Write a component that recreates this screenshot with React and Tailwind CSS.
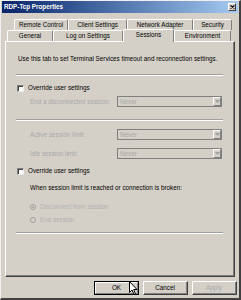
import React from 'react';

const backTabs = [
  ['Remote Control', 'w-[54px]'],
  ['Client Settings', 'w-[59px]'],
  ['Network Adapter', 'w-[66px]'],
  ['Security', 'w-[39px]'],
];

const frontTabs = [
  ['General', 'w-[46px]', false],
  ['Log on Settings', 'w-[70px]', false],
  ['Sessions', 'w-[51px]', true],
  ['Environment', 'w-[57px]', false],
];

const Separator = ({ className = '' }) => (
  <div className={`ml-[10px] mr-[11px] border-t border-t-[#a0a0a0] border-b border-b-white ${className}`} />
);

const Checkbox = () => (
  <div className="w-[7px] h-[7px] bg-white border border-t-[#808080] border-l-[#808080] border-r-[#e8e8e8] border-b-[#e8e8e8] shadow-[inset_1px_1px_0_#404040]" />
);

const Dropdown = () => (
  <div className="ml-auto mr-[12px] w-[105px] h-[11px] flex items-stretch border border-[#808080] bg-[#d4d0c8]">
    <span className="flex-1 pl-[2px] text-[#a8a8a8] leading-[9px]">Never</span>
    <div className="w-[8px] border border-t-white border-l-white border-r-[#808080] border-b-[#808080] flex items-center justify-center">
      <svg width="5" height="3" viewBox="0 0 5 3"><path d="M0 0h5L2.5 3z" fill="#a0a0a0" /></svg>
    </div>
  </div>
);

const Radio = ({ checked }) => (
  <div className="w-[6px] h-[6px] rounded-full border border-[#a0a0a0] bg-[#d4d0c8] flex items-center justify-center">
    {checked && <div className="w-[2px] h-[2px] rounded-full bg-[#a0a0a0]" />}
  </div>
);

const Button = ({ children, isDefault, disabled }) => (
  <div
    className={`w-[45px] h-[14px] flex items-center justify-center border ${
      isDefault ? 'border-black' : 'border-t-white border-l-white border-r-[#404040] border-b-[#404040]'
    } bg-[#d4d0c8]`}
  >
    <div
      className={`w-full h-full flex items-center justify-center ${
        isDefault ? 'border border-t-white border-l-white border-r-[#808080] border-b-[#808080]' : 'border-r border-b border-r-[#808080] border-b-[#808080]'
      } ${disabled ? 'text-[#a8a8a8]' : 'text-black'}`}
    >
      {children}
    </div>
  </div>
);

export default function App() {
  return (
    <div
      className="relative w-[241px] h-[300px] bg-[#d4d0c8] flex flex-col border-l border-t border-l-[#f0f0f0] border-t-[#f0f0f0] border-r-2 border-b-2 border-r-[#404040] border-b-[#404040] text-[6.3px] text-black overflow-hidden"
      style={{ fontFamily: '"Liberation Sans", Arial, sans-serif' }}
    >
      {/* title bar */}
      <div className="h-[12px] mx-[1px] bg-gradient-to-r from-[#0a246a] to-[#a6caf0] flex items-center justify-between pl-[2px] pr-[2px]">
        <span className="text-white font-bold">RDP-Tcp Properties</span>
        <div className="w-[8px] h-[8px] bg-[#d4d0c8] border border-t-white border-l-white border-r-[#404040] border-b-[#404040] flex items-center justify-center">
          <svg width="5" height="4" viewBox="0 0 5 4"><path d="M0.5 0.5L4.5 3.5M4.5 0.5L0.5 3.5" stroke="#000" strokeWidth="1.1" /></svg>
        </div>
      </div>

      {/* tabs */}
      <div className="mt-[6px] flex flex-col">
        <div className="flex pl-[13px] h-[11px]">
          {backTabs.map(([label, w]) => (
            <div
              key={label}
              className={`${w} h-full flex items-center justify-center border-t border-l border-t-white border-l-white border-r border-r-[#808080] rounded-t-[2px]`}
            >
              {label}
            </div>
          ))}
        </div>
        <div className="flex pl-[6px] h-[11px] items-end">
          {frontTabs.map(([label, w, active]) => (
            <div
              key={label}
              className={`${w} flex items-center justify-center border-t border-l border-t-white border-l-white border-r border-r-[#808080] rounded-t-[2px] ${
                active ? 'h-[13px] -mb-[1px] relative z-10 bg-[#d4d0c8] pb-[2px]' : 'h-full'
              }`}
            >
              {label}
            </div>
          ))}
        </div>
      </div>

      {/* panel */}
      <div className="mx-[4px] h-[236px] border border-t-white border-l-white border-r-[#404040] border-b-[#404040] shadow-[inset_-1px_-1px_0_#808080] flex flex-col">
        <div className="mt-[12px] h-[10px] flex items-center pl-[12px]">
          Use this tab to set Terminal Services timeout and reconnection settings.
        </div>
        <Separator className="mt-[10px]" />

        <div className="mt-[7px] h-[10px] flex items-center gap-[4px] pl-[11px]">
          <Checkbox />
          <span>Override user settings</span>
        </div>
        <div className="mt-[3px] h-[11px] flex items-center pl-[24px] text-[#a8a8a8]">
          <span>End a disconnected session:</span>
          <Dropdown />
        </div>
        <Separator className="mt-[12px]" />

        <div className="mt-[8px] h-[11px] flex items-center pl-[24px] text-[#a8a8a8]">
          <span>Active session limit:</span>
          <Dropdown />
        </div>
        <div className="mt-[8px] h-[11px] flex items-center pl-[24px] text-[#a8a8a8]">
          <span>Idle session limit:</span>
          <Dropdown />
        </div>

        <div className="mt-[7px] h-[10px] flex items-center gap-[4px] pl-[11px]">
          <Checkbox />
          <span>Override user settings</span>
        </div>
        <div className="mt-[7px] h-[10px] flex items-center pl-[24px]">
          When session limit is reached or connection is broken:
        </div>
        <div className="mt-[9px] h-[10px] flex items-center gap-[4px] pl-[24px] text-[#b0b0b0]">
          <Radio checked />
          <span>Disconnect from session</span>
        </div>
        <div className="mt-[3px] h-[10px] flex items-center gap-[4px] pl-[24px] text-[#b0b0b0]">
          <Radio />
          <span>End session</span>
        </div>
        <Separator className="mt-[7px]" />
      </div>

      {/* buttons */}
      <div className="mt-[4px] flex justify-end gap-[4px] pr-[2px]">
        <Button isDefault>OK</Button>
        <Button>Cancel</Button>
        <Button disabled>Apply</Button>
      </div>

      {/* mouse pointer */}
      <svg className="absolute left-[128px] top-[280px]" width="9" height="15" viewBox="0 0 9 15">
        <path d="M0.5 0.5V11.5L3 9L5 13.5L6.5 12.8L4.6 8.5H8Z" fill="#fff" stroke="#000" strokeWidth="1" strokeLinejoin="round" />
      </svg>
    </div>
  );
}
